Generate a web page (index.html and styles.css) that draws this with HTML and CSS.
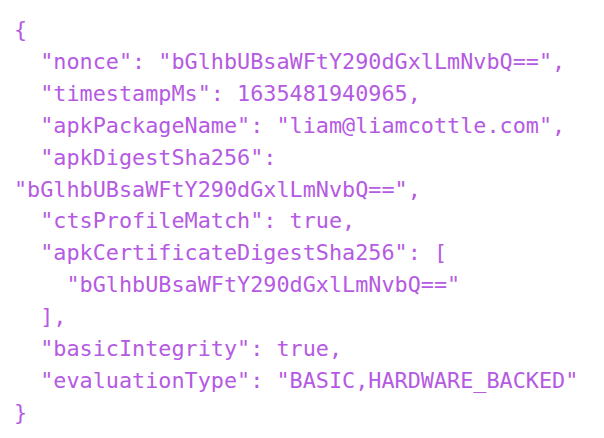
FILE: index.html
```html
<!DOCTYPE html>
<html>
<head>
<meta charset="utf-8">
<link rel="stylesheet" href="styles.css">
</head>
<body>
<pre class="json">{
  "nonce": "bGlhbUBsaWFtY290dGxlLmNvbQ==",
  "timestampMs": 1635481940965,
  "apkPackageName": "liam@liamcottle.com",
  "apkDigestSha256":
"bGlhbUBsaWFtY290dGxlLmNvbQ==",
  "ctsProfileMatch": true,
  "apkCertificateDigestSha256": [
    "bGlhbUBsaWFtY290dGxlLmNvbQ=="
  ],
  "basicIntegrity": true,
  "evaluationType": "BASIC,HARDWARE_BACKED"
}</pre>
</body>
</html>
```
FILE: styles.css
```css
html, body {
  margin: 0;
  padding: 0;
  background: #ffffff;
}
.json {
  margin: 0;
  padding: 14px 0 0 14px;
  font-family: "DejaVu Sans Mono", "Liberation Mono", monospace;
  font-size: 21.8px;
  line-height: 31.9px;
  color: #b55ae2;
  white-space: pre;
}
```
